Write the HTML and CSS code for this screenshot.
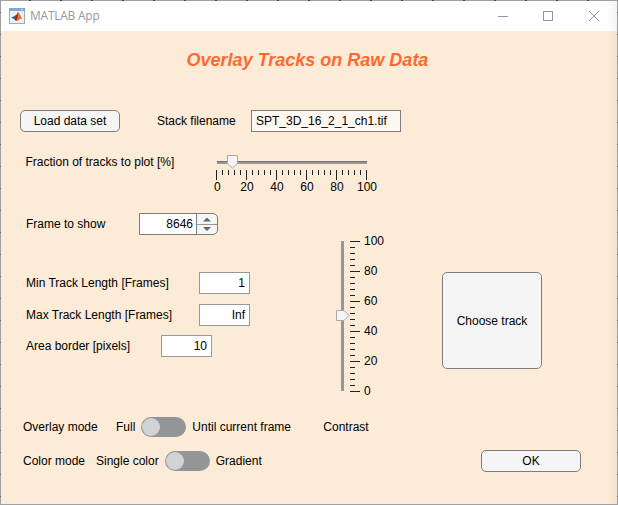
FILE: index.html
```html
<!DOCTYPE html>
<html lang="en">
<head>
<meta charset="utf-8">
<title>MATLAB App</title>
<link rel="stylesheet" href="styles.css">
</head>
<body>
<div class="window">
  <header class="titlebar">
    <svg class="logo" width="16" height="16" viewBox="0 0 16 16">
      <rect x=".5" y=".5" width="15" height="15" fill="#eceff3" stroke="#a3a9b0"/>
      <rect x="0" y="0" width="16" height="3" fill="#7fa6cc"/>
      <rect x="12" y="1" width="2" height="1" fill="#dce8f3"/>
      <path d="M2 9.500 5.500 8l2-1.500 1 3L5.800 11.500z" fill="#34688f"/>
      <path d="M5.500 11.500 7.300 7.500 9 4l1.500 3.500-2 4.500-1.500 1z" fill="#8e2b1c"/>
      <path d="M9 4C10.800 5.500 12 9 13.500 11.300L11.500 10.500 8.800 13 7.500 11.500C9.200 10 9 6 9 4z" fill="#e8702a"/>
    </svg>
    <span class="caption">MATLAB App</span>
    <svg class="controls" width="102" height="12" viewBox="0 0 102 12" fill="none" stroke="#999" shape-rendering="crispEdges">
      <path d="M0 6.500h10"/>
      <rect x="45.500" y="1.500" width="9" height="9"/>
      <path d="M91 1l10 10M101 1 91 11" shape-rendering="auto"/>
    </svg>
  </header>
  <main class="content">
    <h1>Overlay Tracks on Raw Data</h1>
    <div class="row file-row">
      <button class="btn">Load data set</button>
      <span class="label file-label">Stack filename</span>
      <span class="field filename">SPT_3D_16_2_1_ch1.tif</span>
    </div>
    <div class="row fraction-row">
      <span class="label fraction-label">Fraction of tracks to plot [%]</span>
      <svg class="slider" width="180" height="42" viewBox="202 153 180 42">
        <rect x="217" y="161" width="150" height="3" fill="#999793"/>
        <rect x="217" y="161" width="150" height="1" fill="#777572"/>
        <path d="M227.500 155.500h10v8l-5 4.500-5-4.500z" fill="#f5f5f5" stroke="#aaa9a7"/>
        <path class="ticks" d="M216.500 170v10m30-10v10m30-10v10m30-10v10m30-10v10m30-10v10"/>
        <path class="ticks" d="M222.500 170v5m6-5v5m6-5v5m6-5v5m12-5v5m6-5v5m6-5v5m6-5v5m12-5v5m6-5v5m6-5v5m6-5v5m12-5v5m6-5v5m6-5v5m6-5v5m12-5v5m6-5v5m6-5v5m6-5v5"/>
        <g text-anchor="middle">
          <text x="217.300" y="191">0</text><text x="247" y="191">20</text><text x="277" y="191">40</text>
          <text x="307" y="191">60</text><text x="337" y="191">80</text><text x="367" y="191">100</text>
        </g>
      </svg>
    </div>
    <div class="columns">
      <section class="settings">
        <div class="row frame-row">
          <span class="label frame-label">Frame to show</span>
          <span class="spinner">
            <span class="value">8646</span>
            <svg width="20" height="20" viewBox="0 0 20 20">
              <path d="M0 10.500h20" stroke="#999"/>
              <path d="M6 7.500h8L10 3.500zM6 13h8l-4 4z" fill="#666"/>
            </svg>
          </span>
        </div>
        <div class="row min-row"><span class="label length-label">Min Track Length [Frames]</span><span class="field number">1</span></div>
        <div class="row max-row"><span class="label length-label">Max Track Length [Frames]</span><span class="field number">Inf</span></div>
        <div class="row area-row"><span class="label area-label">Area border [pixels]</span><span class="field number">10</span></div>
      </section>
      <svg class="slider contrast" width="60" height="170" viewBox="332 231 60 170">
        <rect x="341" y="241" width="3" height="150" fill="#999793"/>
        <path d="M336.500 310.500h7.500l5 5-5 5h-7.500z" fill="#f5f5f5" stroke="#aaa9a7"/>
        <path class="ticks" d="M350 241.500h10m-10 30h10m-10 30h10m-10 30h10m-10 30h10m-10 30h10"/>
        <path class="ticks" d="M350 247.500h5m-5 6h5m-5 6h5m-5 6h5m-5 12h5m-5 6h5m-5 6h5m-5 6h5m-5 12h5m-5 6h5m-5 6h5m-5 6h5m-5 12h5m-5 6h5m-5 6h5m-5 6h5m-5 12h5m-5 6h5m-5 6h5m-5 6h5"/>
        <text x="364" y="245">100</text><text x="364" y="275">80</text><text x="364" y="305">60</text>
        <text x="364" y="335">40</text><text x="364" y="365">20</text><text x="364" y="395">0</text>
      </svg>
      <button class="btn choose">Choose track</button>
    </div>
    <div class="row overlay-row">
      <span class="label mode-label overlay">Overlay mode</span>
      <span class="label">Full</span>
      <span class="switch"></span>
      <span class="label until">Until current frame</span>
      <span class="label">Contrast</span>
    </div>
    <div class="row color-row">
      <span class="label mode-label color">Color mode</span>
      <span class="label">Single color</span>
      <span class="switch"></span>
      <span class="label">Gradient</span>
      <button class="btn ok">OK</button>
    </div>
  </main>
</div>
</body>
</html>
```

FILE: styles.css
```css
* { box-sizing: border-box; }

body {
  margin: 0;
  width: 618px;
  height: 505px;
  padding: 1px;
  overflow: hidden;
  background:
    repeating-linear-gradient(to right, transparent 0 29px, #444 29px 31px) 0 0 / 100% 1px no-repeat,
    repeating-linear-gradient(to bottom, #a0a0a0 0 12px, #666 12px 13px, #a0a0a0 13px 22px);
  font: 12px/14px "Liberation Sans", Arial, sans-serif;
  color: #000;
}

.window {
  width: 616px;
  height: 503px;
  background: linear-gradient(to left, #f4e2cf, #fcebd7 9px);
}

.titlebar {
  display: flex;
  align-items: center;
  height: 30px;
  padding-left: 8px;
  background: linear-gradient(to left, #f3f3f3, #fff 9px);
}

.logo { display: block; margin-top: -1px; }

.caption {
  margin-left: 5px;
  font: 12px/16px "Open Sans", "Noto Sans", sans-serif;
  letter-spacing: -0.25px;
  color: #999;
}

.controls { margin: -1px 17px 0 auto; }

h1 {
  margin: 0;
  padding-top: 18px;
  height: 79px;
  text-align: center;
  font: italic bold 18px/22px "Liberation Sans", Arial, sans-serif;
  color: #ff6931;
  width: 613px;
}

.row {
  display: flex;
  align-items: center;
  height: 22px;
}

.label { white-space: nowrap; flex: none; }

.btn {
  flex: none;
  width: 100px;
  height: 22px;
  padding: 0;
  border: 1px solid #7d7d7d;
  border-radius: 5px;
  background: #f5f5f5;
  font: inherit;
  color: inherit;
}

.field {
  height: 22px;
  border: 1px solid #999;
  background: #fff;
  line-height: 20px;
}

.file-row { padding-left: 19px; }
.file-label { width: 94px; margin-left: 37px; }

.filename {
  width: 150px;
  padding-left: 4px;
  border-color: #7d7d7d;
  background: #fff8f0;
}

.fraction-row {
  height: 42px;
  margin-top: 21px;
  padding-left: 24.5px;
  align-items: flex-start;
}

.fraction-label { width: 176.5px; margin-top: 2px; }

.slider { display: block; flex: none; }
.slider text { font: 12px "Liberation Sans", Arial, sans-serif; }

.ticks {
  fill: none;
  stroke: #212121;
  shape-rendering: crispEdges;
}

.columns {
  display: flex;
  height: 222px;
  padding: 18px 0 0 25px;
}

.settings { width: 306px; }
.frame-label { width: 113px; }

.spinner {
  display: flex;
  width: 79px;
  height: 22px;
  border: 1px solid #7d7d7d;
  border-radius: 0 5px 5px 0;
  background: #f5f5f5;
}

.value {
  width: 57px;
  padding-right: 3px;
  border-right: 1px solid #7d7d7d;
  background: #fff;
  line-height: 20px;
  text-align: right;
}

.length-label { width: 173px; }
.area-label { width: 135px; }
.number { width: 51px; padding-right: 4px; text-align: right; }
.min-row { margin-top: 37px; }
.max-row { margin-top: 10px; }
.area-row { margin-top: 9px; }

.contrast { margin-top: 18px; }

.choose {
  height: 97px;
  margin: 59px 0 0 50px;
}

.overlay-row { height: 20px; padding-left: 22px; }
.color-row { margin-top: 13px; padding-left: 22px; }
.overlay { width: 93px; }
.color { width: 73px; }
.until { width: 131px; }

.switch {
  width: 45px;
  height: 20px;
  margin: 0 6px;
  padding: 1px;
  border-radius: 10px;
  background: #939598;
}

.switch::before {
  content: "";
  display: block;
  width: 18px;
  height: 18px;
  border-radius: 50%;
  background: #d1d3d4;
}

.ok { margin: 0 36px 0 auto; }
```
